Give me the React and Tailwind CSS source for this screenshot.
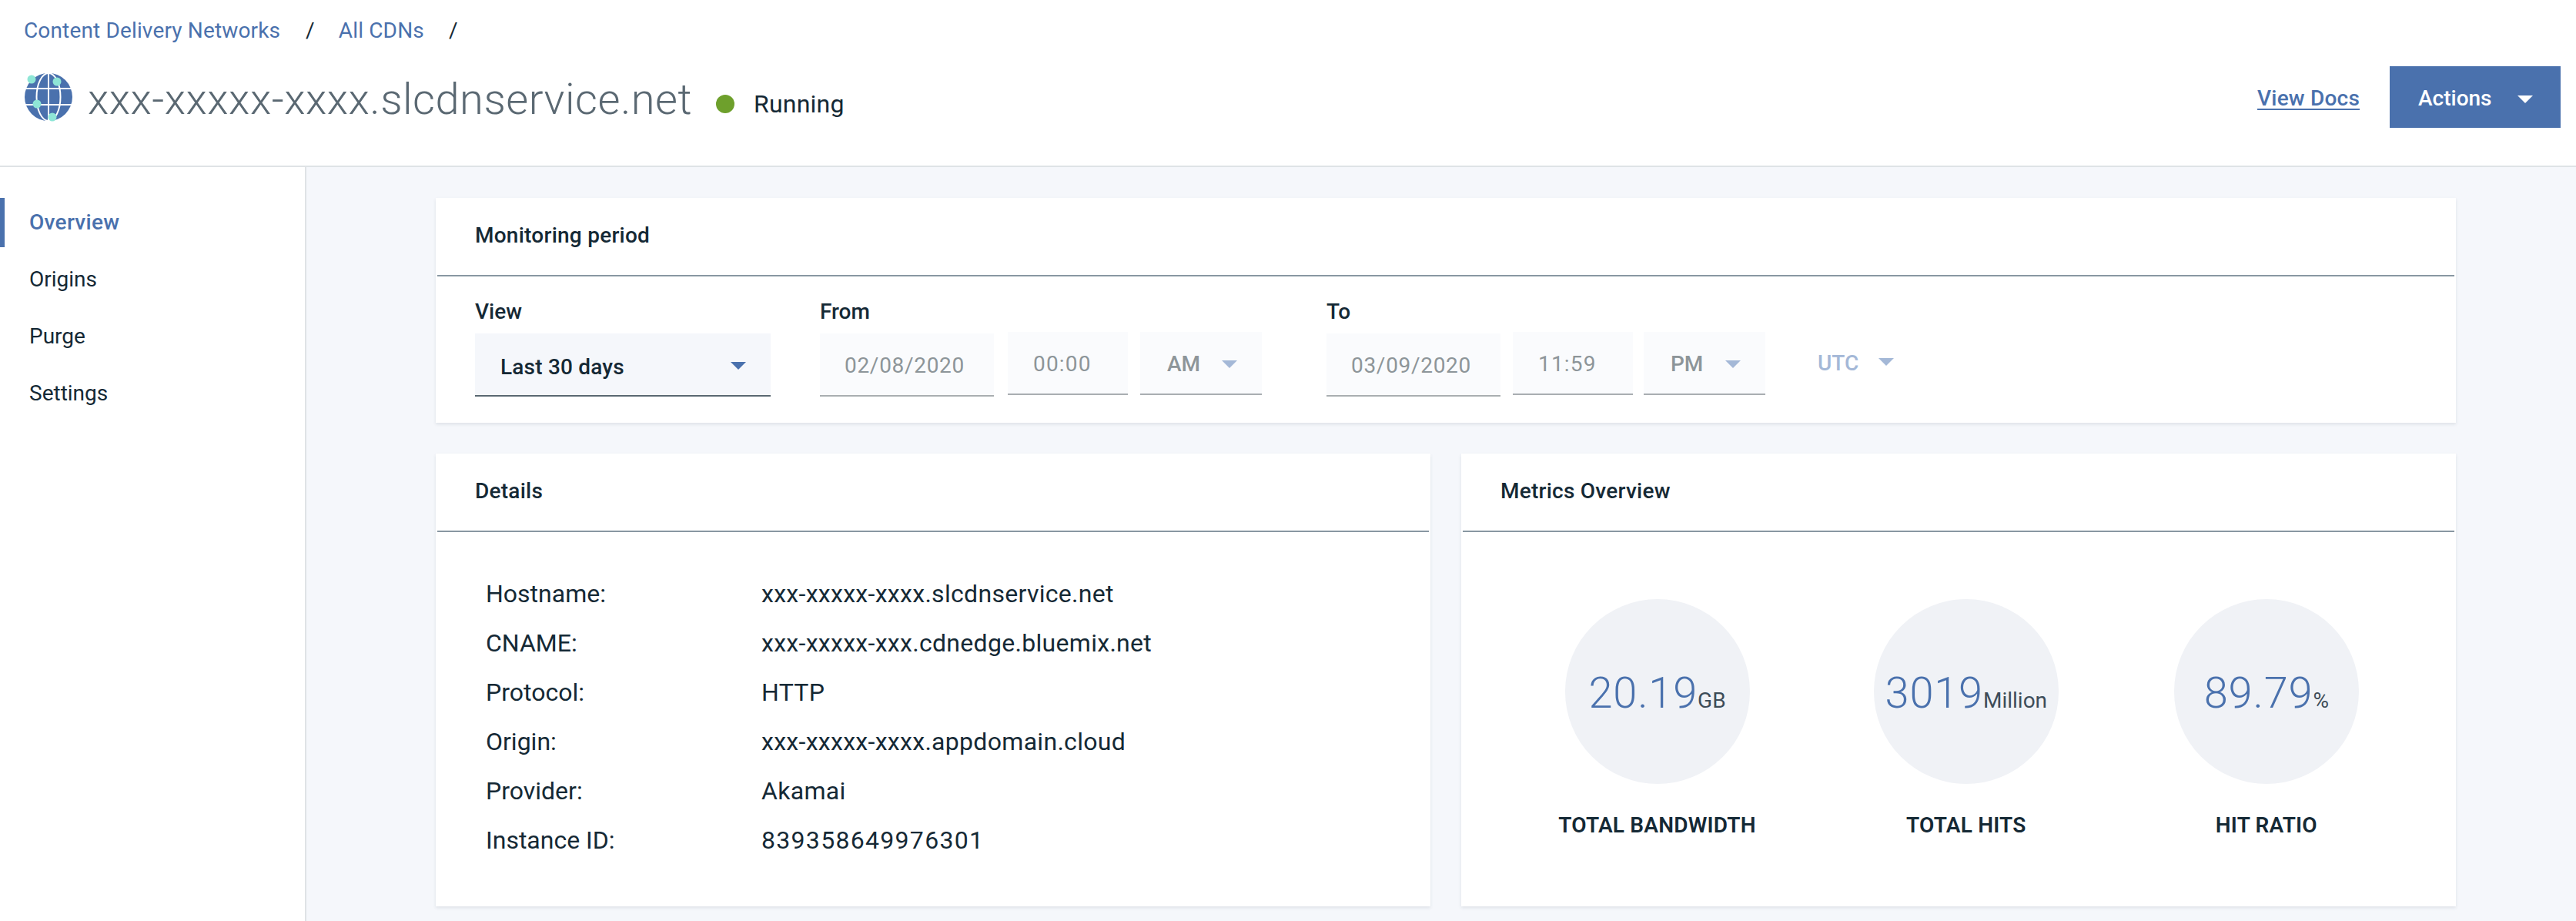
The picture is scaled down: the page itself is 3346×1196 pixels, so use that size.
const font = { fontFamily: '"Roboto", "Liberation Sans", sans-serif' };

function Caret({ className }) {
  return (
    <svg viewBox="0 0 20 10" className={className}>
      <path d="M0 0h20L10 10z" fill="currentColor" />
    </svg>
  );
}

function Globe() {
  return (
    <svg viewBox="0 0 64 64" className="w-[64px] h-[64px] shrink-0">
      <circle cx="32" cy="32" r="31" fill="#4a71ad" />
      <g fill="none" stroke="#fff" strokeWidth="2">
        <ellipse cx="32" cy="32" rx="15.5" ry="31" />
        <path d="M32 0v64M1 21h62M1 42h62" />
      </g>
      <circle cx="10" cy="9" r="5.5" fill="#8fe6d6" />
      <circle cx="43" cy="12" r="5.5" fill="#8fe6d6" />
      <circle cx="17" cy="41" r="5.5" fill="#8fe6d6" />
      <circle cx="37" cy="58" r="5.5" fill="#8fe6d6" />
    </svg>
  );
}

function Card({ title, className, children }) {
  return (
    <section className={`bg-white shadow-[0_2px_4px_rgba(60,70,90,0.12)] ${className}`}>
      <div className="h-[102px] pb-0.5 mx-0.5 border-b-2 border-[#8897a2] flex items-center pl-[49px] text-[28px] font-medium tracking-[0.25px] text-[#152935]">
        {title}
      </div>
      {children}
    </section>
  );
}

function Field({ className, children }) {
  return (
    <div className={`h-[82px] pt-1 bg-[#fafbfd] border-b-2 border-[#a9aeb1] flex items-center text-[28px] text-[#8d9599] ${className}`}>
      {children}
    </div>
  );
}

function DateRange({ label, date, time, period, className, timeGap, periodGap }) {
  return (
    <div className={className}>
      <div className="text-[28px] leading-[36px] font-medium text-[#152935]">{label}</div>
      <div className="flex items-start mt-[10px]">
        <Field className="w-[226px] pl-[32px] tracking-[0.7px]">{date}</Field>
        <Field className={`w-[156px] -mt-0.5 pl-[33px] tracking-[1.2px] ${timeGap}`}>{time}</Field>
        <Field className={`w-[158px] -mt-0.5 pl-[35px] font-medium ${periodGap}`}>
          <span className="w-[71px]">{period}</span>
          <Caret className="w-[20px] h-[10px] text-[#a4b8d7]" />
        </Field>
      </div>
    </div>
  );
}

function Metric({ value, unit, label, className }) {
  return (
    <div className={`flex flex-col items-center ${className}`}>
      <div className="w-[240px] h-[240px] pt-1 rounded-full bg-[#f0f2f6] flex items-center justify-center">
        <div className="flex items-baseline whitespace-nowrap">
          <span className="text-[56px] font-light leading-none tracking-[0.8px] text-[#4a71ad]">{value}</span>
          <span className="text-[28px] leading-none text-[#3d4c58]">{unit}</span>
        </div>
      </div>
      <div className="mt-[36px] text-[28px] leading-[36px] font-semibold tracking-[0.2px] text-[#152935] whitespace-nowrap">{label}</div>
    </div>
  );
}

const details = [
  ['Hostname:', 'xxx-xxxxx-xxxx.slcdnservice.net'],
  ['CNAME:', 'xxx-xxxxx-xxx.cdnedge.bluemix.net'],
  ['Protocol:', 'HTTP'],
  ['Origin:', 'xxx-xxxxx-xxxx.appdomain.cloud'],
  ['Provider:', 'Akamai'],
  ['Instance ID:', '839358649976301', 'tracking-[1.3px]'],
];

const navItems = ['Overview', 'Origins', 'Purge', 'Settings'];

export default function App() {
  return (
    <div className="h-screen flex flex-col bg-[#f5f7fb] text-[#152935] overflow-hidden" style={font}>
      {/* Header */}
      <header className="h-[217px] shrink-0 bg-white border-b-2 border-[#dfe3e6] pl-[31px] pr-[20px]">
        <nav className="flex items-center h-[36px] mt-[22px] text-[28px] tracking-[0.15px] text-[#4a71ad]">
          <a>Content Delivery Networks</a>
          <span className="ml-[33px] text-[#152935]">/</span>
          <a className="ml-[31px]">All CDNs</a>
          <span className="ml-[32px] text-[#152935]">/</span>
        </nav>
        <div className="flex items-center mt-[36px] h-[64px]">
          <Globe />
          <h1 className="ml-[19px] mt-[6px] text-[56px] font-light leading-none tracking-[0.5px] text-[#5a6872]">xxx-xxxxx-xxxx.slcdnservice.net</h1>
          <span className="ml-[31px] mt-[18px] w-[24px] h-[24px] rounded-full bg-[#6ea02c]" />
          <span className="ml-[25px] mt-[18px] text-[32px] tracking-[0.2px] text-[#152935]">Running</span>
          <a className="ml-auto mt-1 text-[28px] font-medium tracking-[0.2px] text-[#4a71ad] underline underline-offset-4">View Docs</a>
          <button className="ml-[39px] w-[222px] h-[80px] pt-1 bg-[#4a71ad] text-white text-[28px] font-medium flex items-center pl-[37px]">
            Actions
            <Caret className="w-[20px] h-[10px] ml-[33px] mt-0.5" />
          </button>
        </div>
      </header>

      <div className="flex flex-1 min-h-0">
        {/* Sidebar */}
        <aside className="w-[398px] shrink-0 bg-white border-r-2 border-[#dfe3e6] pt-[40px] flex flex-col gap-[10px]">
          {navItems.map((item, i) => (
            <a
              key={item}
              className={`h-[64px] flex items-center pl-[38px] text-[28px] ${
                i === 0 ? 'relative font-medium tracking-[0.3px] text-[#4a71ad]' : 'text-[#152935]'
              }`}
            >
              {i === 0 && <span className="absolute left-0 inset-y-0 w-[6px] bg-[#4a71ad]" />}
              {item}
            </a>
          ))}
        </aside>

        {/* Main */}
        <main className="flex-1 pl-[168px] pr-[156px] pt-[40px] flex flex-col gap-[40px]">
          <Card title="Monitoring period" className="h-[292px]">
            <div className="flex items-start pl-[51px] pt-[28px]">
              <div className="w-[384px]">
                <div className="text-[28px] leading-[36px] font-medium">View</div>
                <div className="mt-[10px] h-[82px] pt-2 bg-[#f5f7fb] border-b-2 border-[#5a6872] flex items-center pl-[33px] pr-[32px] justify-between text-[28px] font-medium tracking-[0.2px]">
                  Last 30 days
                  <Caret className="w-[20px] h-[10px] text-[#4a71ad] -mt-1" />
                </div>
              </div>
              <DateRange className="ml-[64px]" label="From" date="02/08/2020" time="00:00" period="AM" timeGap="ml-[18px]" periodGap="ml-[16px]" />
              <DateRange className="ml-[84px]" label="To" date="03/09/2020" time="11:59" period="PM" timeGap="ml-[16px]" periodGap="ml-[14px]" />
              <div className="ml-[68px] mt-[44px] h-[82px] flex items-center text-[28px] font-medium text-[#a4b8d7]">
                UTC
                <Caret className="w-[20px] h-[10px] ml-[26px] -mt-1" />
              </div>
            </div>
          </Card>

          <div className="flex gap-[40px]">
            <Card title="Details" className="w-[1292px] h-[588px]">
              <dl className="pl-[65px] pt-[48px] text-[32px] text-[#152935]">
                {details.map(([k, v, extra]) => (
                  <div key={k} className="flex h-[64px] items-center">
                    <dt className="w-[358px]">{k}</dt>
                    <dd className={extra || 'tracking-[0.3px]'}>{v}</dd>
                  </div>
                ))}
              </dl>
            </Card>
            <Card title="Metrics Overview" className="w-[1292px] h-[588px]">
              <div className="flex justify-center pt-[87px]">
                <Metric value="20.19" unit="GB" label="TOTAL BANDWIDTH" />
                <Metric className="ml-[153px]" value="3019" unit="Million" label="TOTAL HITS" />
                <Metric className="ml-[150px]" value="89.79" unit="%" label="HIT RATIO" />
              </div>
            </Card>
          </div>
        </main>
      </div>
    </div>
  );
}
